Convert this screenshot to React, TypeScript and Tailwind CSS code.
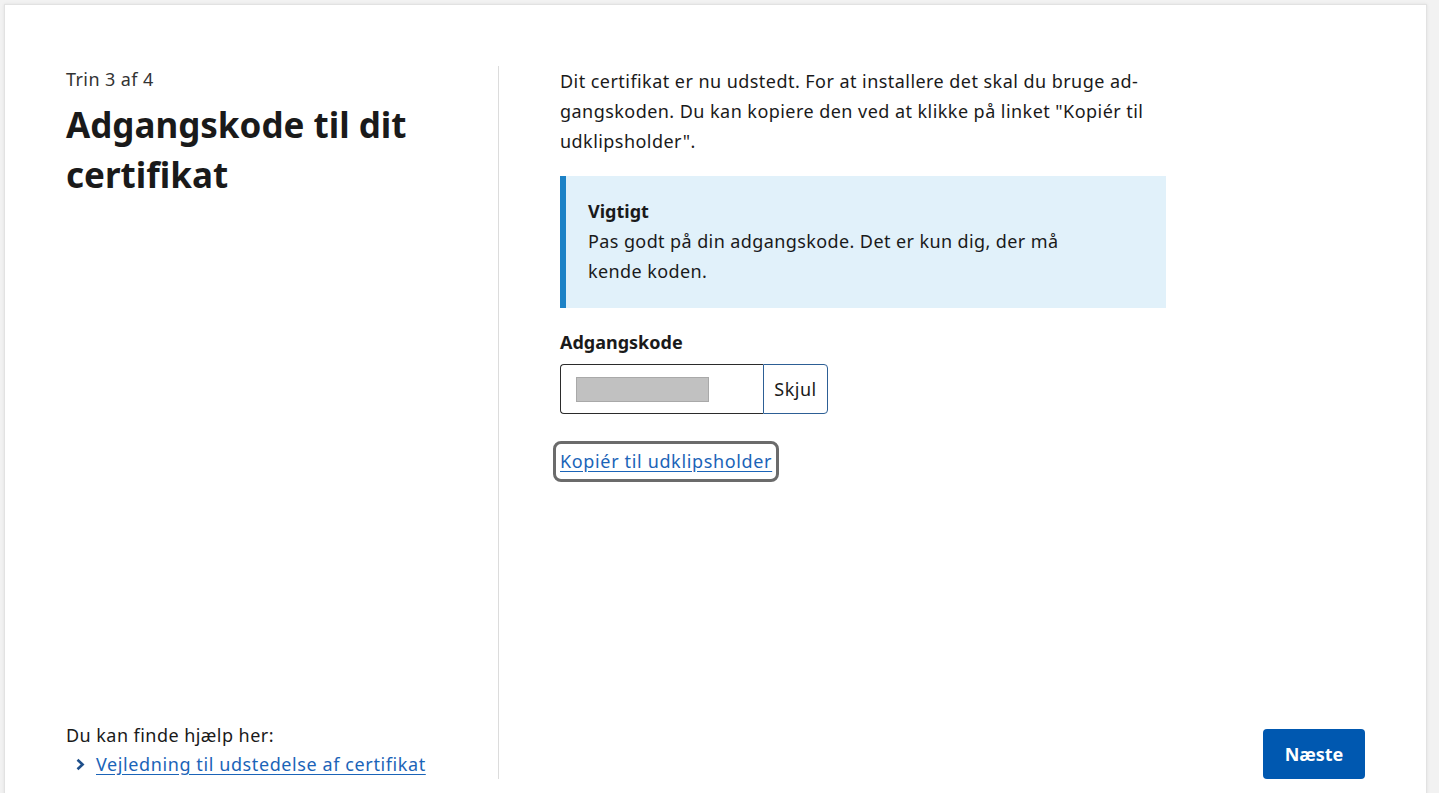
import React from "react";

export default function App() {
  const font = { fontFamily: '"Noto Sans", "Open Sans", Arial, sans-serif' };
  return (
    <div className="min-h-screen bg-[#f2f2f2] pl-[4px] pr-[12px] pt-[4px]" style={font}>
      <div className="border border-[#e2e2e2] bg-white shadow-[0_0_3px_rgba(0,0,0,0.08)]">
        <div className="flex px-[61px] pt-[61px] pb-[60px]">
          <div className="flex h-[713px] w-[433px] flex-col justify-between border-r border-[#dcdcdc] pr-8">
            <div>
              <div className="text-[18px] leading-[26px] tracking-[0.4px] text-[#333]">Trin 3 af 4</div>
              <h1 className="mt-[8px] text-[35px] font-bold leading-[50px] text-[#1a1a1a]">
                Adgangskode til dit
                <br />
                certifikat
              </h1>
            </div>
            <div className="text-[18px] leading-[29px] tracking-[0.45px] text-[#1a1a1a]">
              <div>Du kan finde hjælp her:</div>
              <div className="flex items-center pl-[9px]">
                <svg width="11" height="13" viewBox="0 0 11 13" className="mr-[10px]">
                  <path d="M2.5 1.8 L7.6 6.5 L2.5 11.2" fill="none" stroke="#1f4f8a" strokeWidth="2.6" />
                </svg>
                <a href="#" className="tracking-[0.6px] text-[#1b64b8] underline underline-offset-[3px]">
                  Vejledning til udstedelse af certifikat
                </a>
              </div>
            </div>
          </div>
          <div className="flex flex-1 flex-col justify-between pl-[61px]">
            <div>
              <p className="text-[18px] leading-[30px] tracking-[0.45px] text-[#1a1a1a]">
                Dit certifikat er nu udstedt. For at installere det skal du bruge ad-
                <br />
                gangskoden. Du kan kopiere den ved at klikke på linket "Kopiér til
                <br />
                udklipsholder".
              </p>
              <div className="mt-[20px] w-[606px] border-l-[6px] border-[#1c82c6] bg-[#e1f1fa] pb-[22px] pl-[22px] pt-[20px] text-[18px] leading-[30px] tracking-[0.4px] text-[#1a1a1a]">
                <div className="font-bold tracking-normal">Vigtigt</div>
                <div>
                  Pas godt på din adgangskode. Det er kun dig, der må
                  <br />
                  kende koden.
                </div>
              </div>
              <div className="mt-[21px] text-[18px] font-bold leading-[26px] text-[#1a1a1a]">Adgangskode</div>
              <div className="mt-[9px] flex h-[50px]">
                <div className="flex w-[203px] items-center rounded-l-[4px] border border-r-0 border-[#2b2b2b] pl-[15px]">
                  <div className="h-[25px] w-[133px] border border-[#a9a9a9] bg-[#c1c1c1]" />
                </div>
                <button className="w-[65px] rounded-r-[4px] border border-[#2d5f95] bg-white text-[18px] tracking-[0.5px] text-[#1a1a1a]">
                  Skjul
                </button>
              </div>
              <div className="mt-[27px]">
                <a
                  href="#"
                  className="-ml-[7px] inline-block rounded-[8px] border-[3px] border-[#6b6b6b] px-[4px] py-[4px] text-[18px] leading-[27px] tracking-[0.65px] text-[#1b64b8] underline underline-offset-[3px]"
                >
                  Kopiér til udklipsholder
                </a>
              </div>
            </div>
            <div className="flex justify-end">
              <button className="h-[50px] w-[102px] rounded-[4px] bg-[#0058b0] text-[18px] font-bold text-white">
                Næste
              </button>
            </div>
          </div>
        </div>
      </div>
    </div>
  );
}
